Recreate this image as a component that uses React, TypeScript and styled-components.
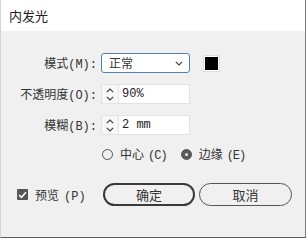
import React from "react";
import styled, { createGlobalStyle } from "styled-components";

const Global = createGlobalStyle`
  html, body { margin: 0; padding: 0; background: #ffffff; }
  body { font-family: "Liberation Mono", "Noto Sans CJK SC", monospace; }
`;

const Window = styled.div`
  box-sizing: border-box;
  width: 306px;
  height: 238px;
  background: #f0f0f0;
  border-left: 1px solid #d4d4d4;
  border-right: 1px solid #7c7c7c;
  border-bottom: 1px solid #5a5a5a;
  display: flex;
  flex-direction: column;
  color: #333;
`;

const TitleBar = styled.div`
  height: 31px;
  flex: none;
  background: #ffffff;
  display: flex;
  align-items: center;
  padding-left: 8px;
  font-family: "Noto Sans CJK SC", sans-serif;
  font-size: 13px;
  color: #222;
`;

const Form = styled.div`
  display: grid;
  grid-template-columns: 96px 89px auto;
  grid-auto-rows: 20px;
  column-gap: 4px;
  row-gap: 11px;
  padding-top: 22px;
  align-items: center;
`;

const Label = styled.div`
  font-size: 12px;
  text-align: right;
  white-space: nowrap;
  color: #333;
`;

const Select = styled.div`
  box-sizing: border-box;
  height: 20px;
  background: #fff;
  border: 1px solid #4f82b0;
  border-radius: 3px;
  display: flex;
  align-items: center;
  justify-content: space-between;
  padding: 0 6px 0 7px;
  font-size: 12px;
`;

const Swatch = styled.div`
  margin-left: 9px;
  box-sizing: border-box;
  width: 17px;
  height: 17px;
  border: 1px solid #dedede;
  background: #fff;
  padding: 1px;
  display: flex;
`;

const SwatchFill = styled.div`
  flex: 1;
  background: #000;
`;

const Spin = styled.div`
  box-sizing: border-box;
  height: 20px;
  display: flex;
  border: 1px solid #e2e2e2;
  background: #fff;
`;

const SpinArrows = styled.div`
  width: 17px;
  flex: none;
  border-right: 1px solid #e2e2e2;
  background: #f7f7f7;
  display: flex;
  flex-direction: column;
  align-items: center;
  justify-content: space-between;
  padding: 3px 0 2px;
  box-sizing: border-box;
`;

const SpinValue = styled.div`
  flex: 1;
  display: flex;
  align-items: center;
  padding-left: 3px;
  font-size: 12px;
  color: #222;
`;

const RadioRow = styled.div`
  grid-column: 2 / span 2;
  align-self: start;
  height: 14px;
  margin-top: 1px;
  display: flex;
  align-items: center;
  gap: 14px;
  padding-left: 1px;
`;

const RadioItem = styled.div`
  display: flex;
  align-items: center;
  gap: 7px;
  font-size: 12px;
  white-space: nowrap;
`;

const Key = styled.span<{ $tight?: boolean }>`
  margin-left: ${(p) => (p.$tight ? "4px" : "5px")};
  letter-spacing: ${(p) => (p.$tight ? "-1px" : "0")};
`;

const RadioCircle = styled.div<{ $on?: boolean }>`
  box-sizing: border-box;
  width: 11px;
  height: 11px;
  border-radius: 50%;
  border: 1px solid #555;
  background: ${(p) => (p.$on ? "#5a5a5a" : "transparent")};
  display: flex;
  align-items: center;
  justify-content: center;
  &::after {
    content: "";
    display: ${(p) => (p.$on ? "block" : "none")};
    width: 3px;
    height: 3px;
    border-radius: 50%;
    background: #e8e8e8;
  }
`;

const Footer = styled.div`
  display: flex;
  align-items: center;
  padding-left: 16px;
  margin-top: 17px;
`;

const CheckItem = styled.div`
  width: 86px;
  display: flex;
  align-items: center;
  gap: 7px;
  font-size: 12px;
  white-space: nowrap;
`;

const CheckBox = styled.div`
  width: 11px;
  height: 11px;
  background: #555;
  border-radius: 1px;
  display: flex;
  align-items: center;
  justify-content: center;
`;

const Buttons = styled.div`
  display: flex;
  gap: 4px;
`;

const Button = styled.div<{ $primary?: boolean }>`
  box-sizing: border-box;
  width: ${(p) => (p.$primary ? "92px" : "93px")};
  height: 23px;
  border-radius: 12px;
  border: ${(p) => (p.$primary ? "2px solid #3a3a3a" : "1px solid #555")};
  display: flex;
  align-items: center;
  justify-content: center;
  font-family: "Noto Sans CJK SC", sans-serif;
  font-size: 13px;
  color: #333;
`;

const Chevron = ({ dir }: { dir: "up" | "down" }) => (
  <svg width="8" height="5" viewBox="0 0 8 5">
    <path
      d={dir === "down" ? "M0.8 0.8 L4 4 L7.2 0.8" : "M0.8 4.2 L4 1 L7.2 4.2"}
      fill="none"
      stroke="#444"
      strokeWidth="1.2"
    />
  </svg>
);

const Spinner = ({ value }: { value: string }) => (
  <Spin>
    <SpinArrows>
      <Chevron dir="up" />
      <Chevron dir="down" />
    </SpinArrows>
    <SpinValue>{value}</SpinValue>
  </Spin>
);

export default function App() {
  return (
    <>
      <Global />
      <Window>
        <TitleBar>内发光</TitleBar>
        <Form>
          <Label>模式(M):</Label>
          <Select>
            <span>正常</span>
            <Chevron dir="down" />
          </Select>
          <Swatch>
            <SwatchFill />
          </Swatch>

          <Label>不透明度(O):</Label>
          <Spinner value="90%" />
          <div />

          <Label>模糊(B):</Label>
          <Spinner value="2 mm" />
          <div />

          <div />
          <RadioRow>
            <RadioItem>
              <RadioCircle />
              <span>
                中心<Key $tight>(C)</Key>
              </span>
            </RadioItem>
            <RadioItem>
              <RadioCircle $on />
              <span>
                边缘<Key $tight>(E)</Key>
              </span>
            </RadioItem>
          </RadioRow>
        </Form>
        <Footer>
          <CheckItem>
            <CheckBox>
              <svg width="9" height="8" viewBox="0 0 9 8">
                <path d="M1 4 L3.5 6.3 L8 1.3" fill="none" stroke="#fff" strokeWidth="1.6" />
              </svg>
            </CheckBox>
            <span>
              预览<Key>(P)</Key>
            </span>
          </CheckItem>
          <Buttons>
            <Button $primary>确定</Button>
            <Button>取消</Button>
          </Buttons>
        </Footer>
      </Window>
    </>
  );
}
